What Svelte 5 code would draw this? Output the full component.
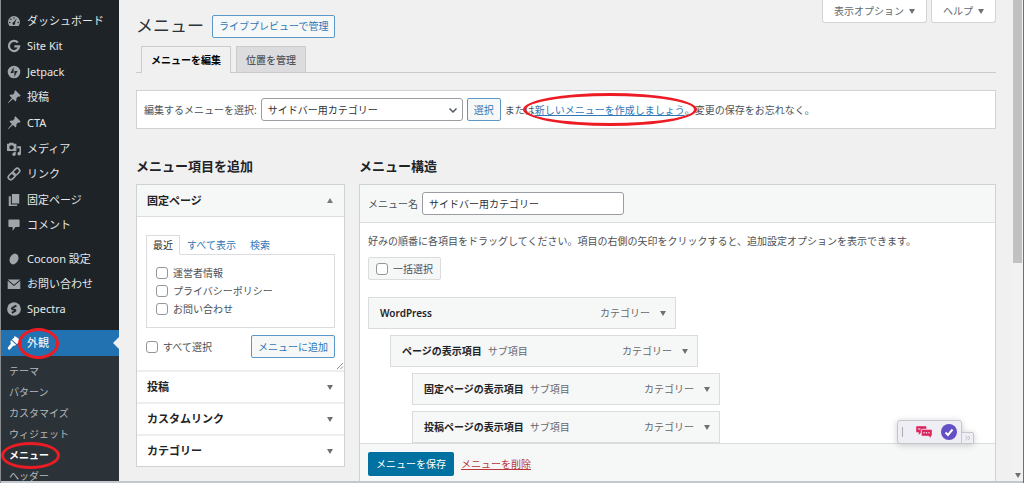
<script lang="ts">
  interface NavItem {
    label: string;
    icon: string;
  }

  const mainNav: NavItem[] = [
    { label: 'ダッシュボード', icon: 'dashboard' },
    { label: 'Site Kit', icon: 'google' },
    { label: 'Jetpack', icon: 'jetpack' },
    { label: '投稿', icon: 'pin' },
    { label: 'CTA', icon: 'pin' },
    { label: 'メディア', icon: 'media' },
    { label: 'リンク', icon: 'link' },
    { label: '固定ページ', icon: 'page' },
    { label: 'コメント', icon: 'comment' },
  ];

  const pluginNav: NavItem[] = [
    { label: 'Cocoon 設定', icon: 'cocoon' },
    { label: 'お問い合わせ', icon: 'mail' },
    { label: 'Spectra', icon: 'spectra' },
  ];

  const subNav = ['テーマ', 'パターン', 'カスタマイズ', 'ウィジェット', 'メニュー', 'ヘッダー'];
  const currentSub = 'メニュー';

  const pages = ['運営者情報', 'プライバシーポリシー', 'お問い合わせ'];
  const closedPanels = ['投稿', 'カスタムリンク', 'カテゴリー'];

  const menuItems = [
    { title: 'WordPress', depth: 0 },
    { title: 'ページの表示項目', depth: 1 },
    { title: '固定ページの表示項目', depth: 2 },
    { title: '投稿ページの表示項目', depth: 2 },
  ];

  let menuName = $state('サイドバー用カテゴリー');
</script>

{#snippet icon(name: string)}
  <svg class="icon" viewBox="0 0 20 20" aria-hidden="true">
    {#if name === 'dashboard'}
      <path fill-rule="evenodd" d="M3.500 17h13c1.200-1.500 2-3.400 2-5.500a8.500 8.500 0 0 0-17 0c0 2.100.800 4 2 5.500zM10 4.500a1.100 1.100 0 1 1 0 2.200 1.100 1.100 0 0 1 0-2.200zM5.500 6.500a1.100 1.100 0 1 1 0 2.200 1.100 1.100 0 0 1 0-2.200zM14 6l-2.500 6.500a2 2 0 1 1-2-1zM4 11a1.100 1.100 0 1 1 0 2.200A1.100 1.100 0 0 1 4 11zm12 0a1.100 1.100 0 1 1 0 2.200 1.100 1.100 0 0 1 0-2.200z" />
    {:else if name === 'google'}
      <path class="line" d="M15.500 5A7.300 7.300 0 1 0 17.300 10.500H10.500" />
    {:else if name === 'jetpack'}
      <path fill-rule="evenodd" d="M10 1a9 9 0 1 1 0 18 9 9 0 0 1 0-18zM9.400 3L5 11.500h4.400zM10.600 17L15 8.500h-4.400z" />
    {:else if name === 'pin'}
      <path d="M12 .500L19.500 8l-1.800 1.500-1.700-.300-2.600 2.700c.400 1.900 0 3.400-1.200 4.600L8.500 13 1.500 19 1 18.500 7 11.500 3.400 7.800c1.200-1.200 2.800-1.500 4.700-1.100l2.700-2.700-.300-1.800z" />
    {:else if name === 'media'}
      <path fill-rule="evenodd" d="M0 2.500h2.500L3.500 1h5.500l1 1.500h3.500V13H0zm6.500 2a3.100 3.100 0 1 0 .100 0zM14.500 6H20v10.500a2.600 2.600 0 1 1-2.200-2.500V9h-3.300zM10 14h2.500v3.500A2.500 2.500 0 1 1 10 15z" />
    {:else if name === 'link'}
      <g class="thin" transform="rotate(-45 10 10)">
        <rect x="0" y="6.500" width="11" height="7" rx="3.500" />
        <rect x="9" y="6.500" width="11" height="7" rx="3.500" />
      </g>
    {:else if name === 'page'}
      <path d="M7 1.500h10.500V15H7zM2.500 4.500H5.500V16.500H14.500V18.500H2.500z" />
    {:else if name === 'comment'}
      <path d="M3.500 2h13c.900 0 1.500.600 1.500 1.500v8c0 .900-.600 1.500-1.500 1.500H12l-4 5.500V13H3.500C2.600 13 2 12.400 2 11.500v-8C2 2.600 2.600 2 3.500 2z" />
    {:else if name === 'cocoon'}
      <ellipse cx="10" cy="10" rx="6" ry="8" transform="rotate(25 10 10)" />
    {:else if name === 'mail'}
      <path d="M1 3.500h18L10 11zM1 5.500l9 7.500 9-7.500v11.500H1z" />
    {:else if name === 'spectra'}
      <circle cx="10" cy="10" r="9.800" />
      <path class="cut" d="M13.500 5L7.500 8.500c-1 1 0 1.800 1 2l2.500.300c1.300.200 1.500 1.200.500 2L7 15.500" />
    {:else if name === 'brush'}
      <path d="M11 0l4 2.500L19 6l-1.500 3-3.500 2.500L7 5l3-2.500zM6 6l7 6.500c-1 1.500-2.500 1.800-4.200 1.300L4.500 19c-1.800 1.500-4.300-.800-3-2.800L5.500 11C4.500 9 4.700 7.500 6 6z" />
    {/if}
  </svg>
{/snippet}

{#snippet navList(items: NavItem[])}
  {#each items as item}
    <li>
      <a class="nav-link" href="#top">{@render icon(item.icon)}{item.label}</a>
    </li>
  {/each}
{/snippet}

<div class="window">
  <nav class="sidebar">
    <ul class="nav main-nav">{@render navList(mainNav)}</ul>
    <ul class="nav plugin-nav">{@render navList(pluginNav)}</ul>

    <a class="nav-link current" href="#top">
      {@render icon('brush')}
      <span class="marked">外観<span class="ring ring-appearance"></span></span>
    </a>
    <ul class="sub-nav">
      {#each subNav as label}
        <li>
          <a href="#top" class:active={label === currentSub}>
            {label}
            {#if label === currentSub}<span class="ring ring-menu"></span>{/if}
          </a>
        </li>
      {/each}
    </ul>
  </nav>

  <main>
    <div class="screen-meta">
      <button type="button">表示オプション <span class="arrow"></span></button>
      <button type="button">ヘルプ <span class="arrow"></span></button>
    </div>

    <header>
      <h1>メニュー</h1>
      <a class="button" href="#top">ライブプレビューで管理</a>
    </header>

    <div class="tabs">
      <a class="tab selected" href="#top">メニューを編集</a>
      <a class="tab" href="#top">位置を管理</a>
    </div>

    <form class="manage">
      <label for="menu">編集するメニューを選択:</label>
      <span class="select">
        <select id="menu">
          <option>サイドバー用カテゴリー</option>
        </select>
        <svg viewBox="0 0 10 10" aria-hidden="true"><path d="M1.500 3.500L5 7l3.500-3.500" /></svg>
      </span>
      <button type="button" class="button">選択</button>
      <p>または<span class="marked"><a href="#top">新しいメニューを作成しましょう</a><span class="ring ring-create"></span></span>。変更の保存をお忘れなく。</p>
    </form>

    <div class="columns">
      <section class="add">
        <h2>メニュー項目を追加</h2>
        <div class="accordion">
          <h3 class="open">固定ページ <span class="arrow up"></span></h3>
          <div class="panel">
            <div class="panel-tabs">
              <a class="on" href="#top">最近</a>
              <a href="#top">すべて表示</a>
              <a href="#top">検索</a>
            </div>
            <div class="page-list">
              {#each pages as page}
                <label class="check"><input type="checkbox" />{page}</label>
              {/each}
            </div>
            <div class="panel-actions">
              <label class="check"><input type="checkbox" />すべて選択</label>
              <button type="button" class="button">メニューに追加</button>
            </div>
            <svg class="grip" viewBox="0 0 8 8" aria-hidden="true"><path d="M1 7l6-6M4.500 7L7 4.500" /></svg>
          </div>
          {#each closedPanels as title}
            <h3>{title} <span class="arrow"></span></h3>
          {/each}
        </div>
      </section>

      <section class="structure">
        <h2>メニュー構造</h2>
        <div class="editor">
          <div class="editor-head">
            <label for="name">メニュー名</label>
            <input id="name" type="text" bind:value={menuName} />
          </div>
          <div class="editor-body">
            <p>好みの順番に各項目をドラッグしてください。項目の右側の矢印をクリックすると、追加設定オプションを表示できます。</p>
            <label class="check bulk"><input type="checkbox" />一括選択</label>
            <ul class="items">
              {#each menuItems as item}
                <li class="depth-{item.depth}">
                  <strong>{item.title}</strong>
                  {#if item.depth > 0}<span>サブ項目</span>{/if}
                  <span class="type">カテゴリー</span>
                  <span class="arrow"></span>
                </li>
              {/each}
            </ul>
          </div>
          <div class="editor-foot">
            <button type="button" class="primary">メニューを保存</button>
            <a class="delete" href="#top">メニューを削除</a>
          </div>
        </div>
      </section>
    </div>
  </main>

  <div class="scrollbar">
    <div class="thumb"></div>
    <span class="arrow"></span>
  </div>

  <div class="widget">
    <div class="widget-main">
      <span class="handle"></span>
      <svg class="chat" viewBox="0 0 32 24" aria-hidden="true">
        <path d="M2 0h17a2 2 0 0 1 2 2v4h-7a4 4 0 0 0-4 4v4l-5 4v-5H2a2 2 0 0 1-2-2V2a2 2 0 0 1 2-2z" />
        <path d="M13 7h17a2 2 0 0 1 2 2v9a2 2 0 0 1-2 2v4l-5-4H13a2 2 0 0 1-2-2V9a2 2 0 0 1 2-2z" />
        <g class="dots">
          <circle cx="16" cy="13.500" r="1.500" />
          <circle cx="21" cy="13.500" r="1.500" />
          <circle cx="26" cy="13.500" r="1.500" />
          <rect x="4" y="5" width="5" height="2" />
        </g>
      </svg>
      <svg class="tick" viewBox="0 0 16 16" aria-hidden="true">
        <circle cx="8" cy="8" r="8" />
        <path d="M4.500 8.500l2.500 2.500 4.500-5.500" />
      </svg>
    </div>
    <svg class="more" viewBox="0 0 12 12" aria-hidden="true"><path d="M3.500 3.500L6 6 3.500 8.500M6.500 3.500L9 6 6.500 8.500" /></svg>
  </div>
</div>

<style>
  :global(body) {
    margin: 0;
    background: #f0f0f0;
  }

  .window {
    position: relative;
    display: flex;
    box-sizing: border-box;
    height: 100vh;
    overflow: hidden;
    border: solid #8a8d90;
    border-width: 0 1px 0 1px;
    border-right-color: #6c6f73;
    font-family: "Noto Sans", "Noto Sans CJK JP", sans-serif;
    font-size: 10px;
    line-height: 16px;
    color: #4c5157;
  }

  .window::after {
    content: "";
    position: absolute;
    inset: auto 0 0 0;
    height: 2px;
    background: #c3c8ce;
  }

  .window :global(*) {
    box-sizing: border-box;
  }

  ul, p, h1, h2, h3 {
    margin: 0;
    padding: 0;
    list-style: none;
  }

  a {
    color: #2e78b7;
  }

  button, input, select {
    font: inherit;
    margin: 0;
  }

  .marked {
    position: relative;
  }

  .ring {
    position: absolute;
    border: 3px solid #ed1c24;
    border-radius: 50%;
    pointer-events: none;
    z-index: 2;
  }

  .ring-appearance {
    inset: -7px -10px -8px -9px;
  }

  .ring-menu {
    left: 0;
    top: -3px;
    width: 59px;
    height: 27px;
  }

  .ring-create {
    inset: -10px -12px -9px -12px;
  }

  .arrow {
    display: inline-block;
    flex: none;
    border: solid transparent;
    border-width: 5px 3px 0;
    border-top-color: #6c7177;
  }

  .arrow.up {
    border-width: 0 3px 5px;
    border-bottom-color: #787c82;
  }

  /* sidebar */

  .sidebar {
    flex: 0 0 118px;
    padding-top: 8px;
    background: #1d2327;
  }

  .nav {
    display: grid;
    grid-auto-rows: 1fr;
  }

  .main-nav {
    height: 230px;
    margin-bottom: 8px;
  }

  .plugin-nav {
    height: 76px;
    margin-bottom: 8px;
  }

  .nav-link {
    display: flex;
    align-items: center;
    gap: 6px;
    padding-left: 6px;
    font-size: 11px;
    color: #e6e7e8;
    text-decoration: none;
  }

  .nav .nav-link {
    height: 100%;
  }

  .icon {
    width: 14px;
    height: 14px;
    fill: #a0a5aa;
  }

  .icon .line {
    fill: none;
    stroke: #a0a5aa;
    stroke-width: 3.2;
  }

  .icon .thin {
    fill: none;
    stroke: #a0a5aa;
    stroke-width: 2.4;
  }

  .icon .cut {
    fill: none;
    stroke: #1d2327;
    stroke-width: 2.6;
  }

  .current {
    position: relative;
    height: 26px;
    background: #2271b1;
    color: #fff;
  }

  .current .icon {
    fill: #fff;
  }

  .current::after {
    content: "";
    position: absolute;
    right: 0;
    top: 7px;
    border: 6px solid transparent;
    border-left-width: 0;
    border-right-color: #f0f0f0;
  }

  .sub-nav {
    height: 140px;
    padding-top: 5px;
    background: #2c3338;
  }

  .sub-nav a {
    position: relative;
    display: block;
    height: 21px;
    padding-left: 8px;
    line-height: 21px;
    color: #b4b9be;
    text-decoration: none;
  }

  .sub-nav .active {
    color: #fff;
    font-weight: 700;
  }

  /* page */

  main {
    position: relative;
    flex: 1;
    min-width: 0;
    padding: 14px 16px 0 17px;
  }

  .screen-meta {
    position: absolute;
    top: 0;
    right: 16px;
    display: flex;
    gap: 4px;
  }

  .screen-meta button {
    display: flex;
    align-items: center;
    gap: 5px;
    height: 23px;
    padding: 0 11px;
    border: 1px solid #d2d4d6;
    border-top: 0;
    border-radius: 0 0 3px 3px;
    background: #fff;
    color: #646970;
  }

  header {
    display: flex;
    align-items: center;
    gap: 8px;
    height: 24px;
  }

  h1 {
    font-size: 17px;
    line-height: 24px;
    font-weight: 400;
    color: #2c3338;
  }

  .button {
    display: flex;
    align-items: center;
    justify-content: center;
    height: 23px;
    padding: 0 6px;
    border: 1px solid #5b97c7;
    border-radius: 2px;
    background: #f6f7f7;
    color: #2e78b7;
    text-decoration: none;
    white-space: nowrap;
  }

  .tabs {
    display: flex;
    align-items: flex-end;
    gap: 5px;
    margin-top: 8px;
    padding-left: 5px;
    border-bottom: 1px solid #c9cbcd;
  }

  .tab {
    height: 26px;
    padding: 0 9px;
    border: 1px solid #c9cbcd;
    border-bottom: 0;
    background: #dcdcde;
    font-weight: 500;
    line-height: 26px;
    color: #50575e;
    text-decoration: none;
  }

  .tab.selected {
    height: 27px;
    margin-bottom: -1px;
    background: #f0f0f0;
    font-weight: 700;
    color: #000;
  }

  .manage {
    display: flex;
    align-items: center;
    gap: 4px;
    height: 39px;
    margin-top: 17px;
    padding: 0 7px;
    border: 1px solid #d0d2d4;
    background: #fff;
  }

  .select {
    position: relative;
    width: 202px;
  }

  .select select {
    display: block;
    width: 100%;
    height: 23px;
    padding: 0 6px;
    border: 1px solid #9a9da1;
    border-radius: 3px;
    appearance: none;
    background: #fff;
    color: #2c3338;
  }

  .select svg {
    position: absolute;
    right: 5px;
    top: 7px;
    width: 10px;
    height: 10px;
    fill: none;
    stroke: #50575e;
    stroke-width: 1.5;
    pointer-events: none;
  }

  .columns {
    display: flex;
    align-items: flex-start;
    gap: 14px;
    margin-top: 27px;
  }

  .add {
    flex: 0 0 209px;
  }

  .structure {
    flex: 1;
    min-width: 0;
  }

  h2 {
    margin-bottom: 8px;
    font-size: 13px;
    line-height: 20px;
    font-weight: 700;
    color: #1d2327;
  }

  .accordion {
    border: 1px solid #cfd2d4;
    background: #fff;
  }

  h3 {
    display: flex;
    align-items: center;
    justify-content: space-between;
    height: 32px;
    padding: 0 11px 0 10px;
    border-top: 2px solid #eeeeef;
    font-size: 11px;
    font-weight: 700;
    color: #1d2327;
  }

  h3.open {
    border-top: 0;
    border-bottom: 1px solid #dcdee0;
    background: #f6f7f7;
  }

  .panel {
    position: relative;
    padding: 18px 9px 12px;
  }

  .panel-tabs {
    display: flex;
    margin-bottom: -1px;
  }

  .panel-tabs a {
    height: 20px;
    padding: 0 7px;
    line-height: 20px;
    text-decoration: none;
  }

  .panel-tabs .on {
    position: relative;
    padding: 0 6px;
    border: 1px solid #dcdcde;
    border-bottom-color: #fff;
    line-height: 18px;
    color: #2c3338;
  }

  .page-list {
    display: flex;
    flex-direction: column;
    gap: 2px;
    padding: 10px 9px;
    border: 1px solid #dcdcde;
  }

  .check {
    display: flex;
    align-items: center;
    gap: 5px;
  }

  .check input {
    width: 12px;
    height: 12px;
    border: 1px solid #93969b;
    border-radius: 3px;
    appearance: none;
    background: #fff;
  }

  .panel-actions {
    display: flex;
    align-items: center;
    justify-content: space-between;
    margin-top: 7px;
  }

  .grip {
    position: absolute;
    right: 0;
    bottom: 0;
    width: 8px;
    height: 8px;
    stroke: #8c8f94;
  }

  .editor {
    border: 1px solid #cfd2d4;
    background: #fff;
  }

  .editor-head {
    display: flex;
    align-items: center;
    gap: 4px;
    height: 38px;
    padding: 0 8px;
    border-bottom: 1px solid #dcdcde;
    background: #f6f7f7;
  }

  .editor-head input {
    width: 202px;
    height: 23px;
    padding: 0 6px;
    border: 1px solid #9a9da1;
    border-radius: 3px;
    background: #fff;
    color: #2c3338;
  }

  .editor-body {
    padding: 10px 8px 0;
  }

  .bulk {
    width: max-content;
    height: 23px;
    margin-top: 8px;
    padding: 0 7px;
    border: 1px solid #dcdcde;
    border-radius: 2px;
    background: #f6f7f7;
  }

  .items {
    display: flex;
    flex-direction: column;
    gap: 6px;
    margin-top: 17px;
  }

  .items li {
    display: flex;
    align-items: center;
    gap: 6px;
    width: 308px;
    height: 32px;
    padding: 0 9px 0 11px;
    border: 1px solid #dcdcde;
    background: #f6f7f7;
    color: #646970;
  }

  .items .depth-1 {
    margin-left: 22px;
  }

  .items .depth-2 {
    margin-left: 44px;
  }

  .items strong {
    font-weight: 600;
    color: #1d2327;
  }

  .items .type {
    margin: 0 4px 0 auto;
  }

  .editor-foot {
    display: flex;
    align-items: center;
    gap: 7px;
    height: 40px;
    padding: 0 8px;
    border-top: 1px solid #dcdcde;
    background: #f6f7f7;
  }

  .primary {
    height: 24px;
    padding: 0 8px;
    border: 0;
    border-radius: 2px;
    background: #0071a1;
    color: #fff;
  }

  .delete {
    color: #b9373a;
  }

  .scrollbar {
    display: flex;
    flex: 0 0 11px;
    flex-direction: column;
    align-items: center;
    justify-content: space-between;
    padding-bottom: 5px;
    background: #f1f1f1;
  }

  .thumb {
    width: 9px;
    height: 55%;
    background: #c1c1c1;
  }

  /* floating toolbar */

  .widget {
    position: absolute;
    right: 49px;
    bottom: 39px;
    display: flex;
    align-items: flex-end;
    filter: drop-shadow(0 1px 3px #0003);
  }

  .widget-main {
    display: flex;
    align-items: center;
    gap: 9px;
    height: 24px;
    padding: 0 4px;
    border: 1px solid #c6c7cd;
    border-radius: 3px 3px 0 3px;
    background: #eeeef4;
  }

  .handle {
    width: 1px;
    height: 10px;
    margin-right: 4px;
    background: #a9abb3;
  }

  .chat {
    width: 16px;
    height: 12px;
    fill: #dc2660;
  }

  .chat path {
    stroke: #eeeef4;
    stroke-width: 0.8;
  }

  .dots {
    fill: #eeeef4;
  }

  .tick {
    width: 16px;
    height: 16px;
    fill: #6350c4;
  }

  .tick path {
    fill: none;
    stroke: #fff;
    stroke-width: 2;
  }

  .more {
    width: 12px;
    height: 12px;
    border: 1px solid #c6c7cd;
    border-left: 0;
    border-radius: 0 2px 2px 0;
    background: #eeeef4;
    fill: none;
    stroke: #b6b8c0;
  }
</style>
